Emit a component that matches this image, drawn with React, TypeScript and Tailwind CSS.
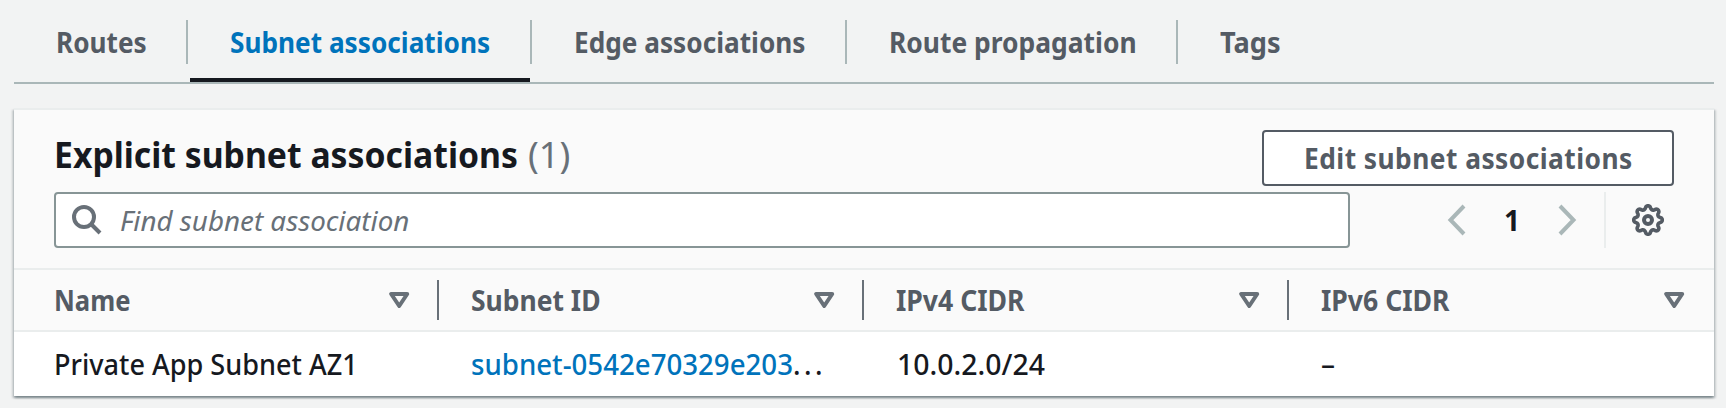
import type { ReactNode } from 'react';

const tabs = [
  { label: 'Routes', box: 'w-[174px] pl-[42px]', fit: 'scale-x-[0.935]' },
  { label: 'Subnet associations', box: 'w-[344px] pl-[42px]', fit: 'scale-x-[0.936]', active: true },
  { label: 'Edge associations', box: 'w-[315px] pl-[42px]', fit: 'scale-x-[0.936]' },
  { label: 'Route propagation', box: 'w-[331px] pl-[42px]', fit: 'scale-x-[0.943]' },
  { label: 'Tags', box: 'w-[160px] pl-[42px]', fit: 'scale-x-[0.97]' },
];

const columns = [
  { label: 'Name', fit: 'scale-x-[0.915]' },
  { label: 'Subnet ID', fit: 'scale-x-[0.945]' },
  { label: 'IPv4 CIDR', fit: 'scale-x-[0.95]' },
  { label: 'IPv6 CIDR', fit: 'scale-x-[0.95]' },
];

function Bold({ fit, children }: { fit: string; children: ReactNode }) {
  return <span className={'inline-block origin-left font-bold whitespace-nowrap ' + fit}>{children}</span>;
}

function SortIcon() {
  return (
    <svg className="h-4 w-[21px] shrink-0" viewBox="0 0 21 16" fill="none" stroke="#687078" strokeWidth="4" strokeLinejoin="round">
      <path d="M2.200 2h16l-8 12z" />
    </svg>
  );
}

function Gear() {
  const points: string[] = [];
  for (let i = 0; i < 128; i++) {
    const a = (i / 128) * Math.PI * 2;
    const wave = Math.cos(8 * a);
    const r = 12.6 + 1.7 * Math.sign(wave) * Math.pow(Math.abs(wave), 0.6);
    points.push((16 + r * Math.cos(a)).toFixed(2) + ',' + (16 + r * Math.sin(a)).toFixed(2));
  }
  return (
    <svg className="size-8" viewBox="0 0 32 32" fill="none" stroke="#545b64" strokeWidth="3.6">
      <polygon points={points.join(' ')} strokeLinejoin="round" />
      <circle cx="16" cy="16" r="4" strokeWidth="4" />
    </svg>
  );
}

export default function App() {
  return (
    <div className="h-[408px] overflow-hidden bg-[#f2f3f3] px-[14px] pr-3 pb-3 font-['Noto_Sans',sans-serif] text-[28px] leading-10 text-[#16191f]">
      <div className="w-[1700px]">
        <nav className="flex h-[84px] border-b-2 border-[#aab7b8] pt-5">
          {tabs.map((t, i) => (
            <div key={t.label} className={'relative h-[62px] ' + t.box}>
              <div className={t.active ? 'h-11 pt-[2px] text-[#0073bb]' : 'h-11 pt-[2px] text-[#545b64]'}>
                <Bold fit={t.fit}>{t.label}</Bold>
              </div>
              {i < 4 && <span className="absolute top-0 right-0 h-11 w-0.5 bg-[#aab7b8]" />}
              {t.active && <span className="absolute right-[2px] bottom-0 left-[2px] h-1 bg-[#16191f]" />}
            </div>
          ))}
        </nav>

        <section className="mt-6 h-[288px] border-t-2 border-[#eaeded] bg-white shadow-[0_2px_2px_0_rgba(0,28,36,0.3),2px_2px_2px_0_rgba(0,28,36,0.15),-2px_2px_2px_0_rgba(0,28,36,0.15)]">
          <header className="h-40 border-b-2 border-[#eaeded] bg-[#fafafa] pr-10 pl-10">
            <div className="flex h-[82px] justify-between pt-5">
              <h2 className="flex pt-px text-[36px] leading-[48px]">
                <span className="w-[474px]">
                  <Bold fit="scale-x-[0.937]">Explicit subnet associations</Bold>
                </span>
                <span className="text-[#687078]">(1)</span>
              </h2>
              <button className="flex h-14 w-[412px] items-center rounded-[4px] border-2 border-[#545b64] bg-white pl-10 text-[#545b64]">
                <span className="origin-left scale-x-[0.94] font-bold tracking-[0.5px] whitespace-nowrap">Edit subnet associations</span>
              </button>
            </div>
            <div className="flex h-14">
              <div className="flex w-[1296px] items-center rounded-[4px] border-2 border-[#879596] bg-white pl-4">
                <svg className="size-[30px]" viewBox="0 0 30 30" fill="none" stroke="#687078" strokeWidth="4">
                  <circle cx="12" cy="12" r="10" />
                  <path d="M19 19l9 9" />
                </svg>
                <span className="ml-[18px] origin-left scale-x-[0.992] whitespace-nowrap text-[#687078] italic">Find subnet association</span>
              </div>
              <div className="ml-[97px] flex items-center">
                <svg className="h-8 w-5" viewBox="0 0 20 32" fill="none" stroke="#aab7b8" strokeWidth="4">
                  <path d="M17 2L3.5 16L17 30" />
                </svg>
                <span className="w-[90px] text-center font-bold">1</span>
                <svg className="h-8 w-5" viewBox="0 0 20 32" fill="none" stroke="#aab7b8" strokeWidth="4">
                  <path d="M3 2L16.500 16L3 30" />
                </svg>
              </div>
              <div className="ml-[27px] flex items-center border-l-2 border-[#eaeded] pl-[26px]">
                <Gear />
              </div>
            </div>
          </header>

          <div className="grid h-[62px] grid-cols-4 border-b-2 border-[#eaeded] bg-[#fafafa] text-[#545b64]">
            {columns.map((c, i) => (
              <div key={c.label} className={'flex items-center ' + (i === 0 ? 'pl-10' : 'pl-8')}>
                <div className="flex flex-1 items-center justify-between">
                  <Bold fit={c.fit}>{c.label}</Bold>
                  <SortIcon />
                </div>
                <span className={i < 3 ? 'ml-[27px] h-10 w-0.5 bg-[#687078]' : 'ml-[27px] h-10 w-0.5'} />
              </div>
            ))}
          </div>

          <div className="grid h-16 grid-cols-4 items-center font-medium whitespace-nowrap">
            <div className="pl-10">
              <span className="inline-block origin-left scale-x-[0.967]">Private App Subnet AZ1</span>
            </div>
            <div className="pl-8">
              <span className="inline-block origin-left scale-x-[0.987]">
                <a className="text-[#0073bb]">subnet-0542e70329e203</a>
                <span className="tracking-[3.5px]">...</span>
              </span>
            </div>
            <div className="pl-8">
              <span className="ml-px inline-block origin-left scale-x-[1.015]">10.0.2.0/24</span>
            </div>
            <div className="pl-8">–</div>
          </div>
        </section>
      </div>
    </div>
  );
}
